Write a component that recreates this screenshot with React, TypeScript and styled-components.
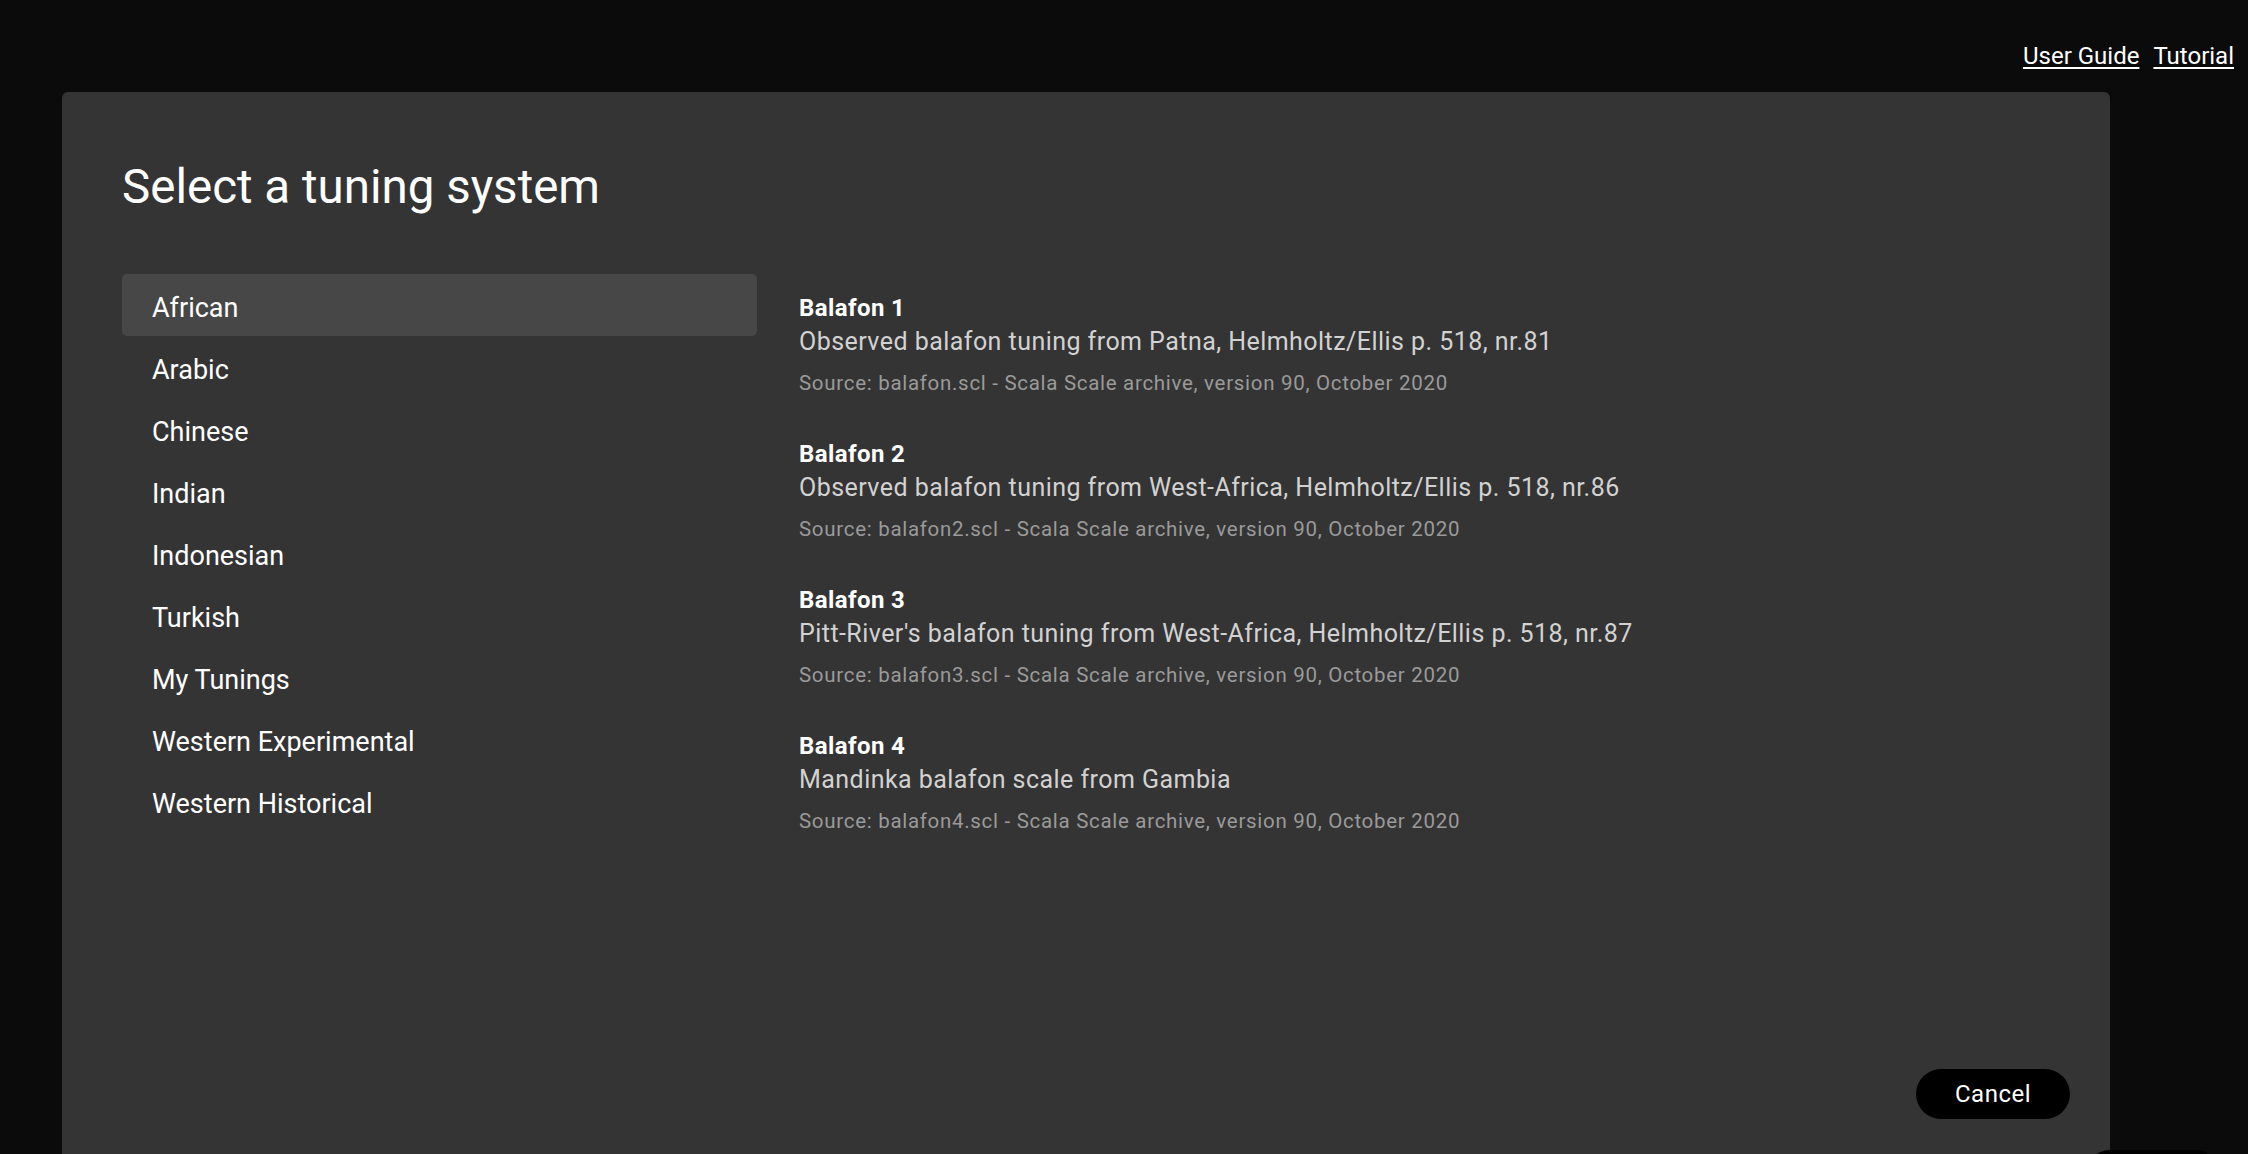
import React, { useState } from "react";
import styled, { createGlobalStyle } from "styled-components";

const GlobalStyle = createGlobalStyle`
  html, body {
    margin: 0;
    padding: 0;
    background: #0b0b0b;
    color: #ffffff;
    font-family: Roboto, "Liberation Sans", Arial, sans-serif;
    overflow: hidden;
  }

  * {
    box-sizing: border-box;
  }
`;

const CATEGORIES = [
  "African",
  "Arabic",
  "Chinese",
  "Indian",
  "Indonesian",
  "Turkish",
  "My Tunings",
  "Western Experimental",
  "Western Historical",
];

interface Tuning {
  name: string;
  description: string;
  source: string;
}

const TUNINGS: Tuning[] = [
  {
    name: "Balafon 1",
    description:
      "Observed balafon tuning from Patna, Helmholtz/Ellis p. 518, nr.81",
    source:
      "Source: balafon.scl - Scala Scale archive, version 90, October 2020",
  },
  {
    name: "Balafon 2",
    description:
      "Observed balafon tuning from West-Africa, Helmholtz/Ellis p. 518, nr.86",
    source:
      "Source: balafon2.scl - Scala Scale archive, version 90, October 2020",
  },
  {
    name: "Balafon 3",
    description:
      "Pitt-River's balafon tuning from West-Africa, Helmholtz/Ellis p. 518, nr.87",
    source:
      "Source: balafon3.scl - Scala Scale archive, version 90, October 2020",
  },
  {
    name: "Balafon 4",
    description: "Mandinka balafon scale from Gambia",
    source:
      "Source: balafon4.scl - Scala Scale archive, version 90, October 2020",
  },
];

const Page = styled.div`
  width: 100vw;
  height: 100vh;
  overflow: hidden;
`;

const TopBar = styled.nav`
  height: 92px;
  display: flex;
  justify-content: flex-end;
  align-items: flex-start;
  gap: 14px;
  padding: 42px 14px 0 0;
`;

const TopLink = styled.a`
  color: #ffffff;
  font-size: 24px;
  line-height: 28px;
  text-decoration: underline;
  text-underline-offset: 3px;
  cursor: pointer;
`;

const Modal = styled.section`
  margin-left: 62px;
  width: 2048px;
  height: 1080px;
  background: #343434;
  border-radius: 6px;
  padding: 67px 40px 53px 60px;
  display: flex;
  flex-direction: column;
`;

const Title = styled.h1`
  margin: 0;
  font-size: 47.5px;
  line-height: 56px;
  font-weight: 400;
`;

const Body = styled.div`
  margin-top: 59px;
  display: flex;
  gap: 42px;
  flex: 1;
`;

const CategoryList = styled.ul`
  list-style: none;
  margin: 0;
  padding: 0;
  width: 635px;
  flex-shrink: 0;
`;

const CategoryItem = styled.li<{ $active: boolean }>`
  height: 62px;
  line-height: 62px;
  padding: 3px 0 0 30px;
  font-size: 27px;
  border-radius: 5px;
  background: ${(p) => (p.$active ? "#474747" : "transparent")};
  cursor: pointer;
`;

const TuningList = styled.div`
  padding-top: 17px;
  display: flex;
  flex-direction: column;
  gap: 40px;
`;

const TuningEntry = styled.div`
  display: flex;
  flex-direction: column;
`;

const TuningName = styled.div`
  font-size: 24px;
  line-height: 34px;
  font-weight: 700;
  letter-spacing: 0.4px;
`;

const TuningDescription = styled.div`
  font-size: 25px;
  line-height: 34px;
  letter-spacing: 0.45px;
  color: #d2d2d2;
`;

const TuningSource = styled.div`
  margin-top: 10px;
  font-size: 20.5px;
  line-height: 28px;
  letter-spacing: 0.7px;
  color: #9a9a9a;
`;

const Footer = styled.div`
  display: flex;
  justify-content: flex-end;
`;

const CancelButton = styled.button`
  min-width: 154px;
  height: 50px;
  border: none;
  border-radius: 25px;
  background: #000000;
  color: #ffffff;
  font-family: inherit;
  font-size: 24px;
  letter-spacing: 0.5px;
  cursor: pointer;
`;

const PeekingPill = styled.div`
  position: fixed;
  right: 28px;
  bottom: -46px;
  width: 135px;
  height: 50px;
  border-radius: 25px;
  background: #000000;
`;

const App = () => {
  const [selected, setSelected] = useState("African");

  return (
    <Page>
      <GlobalStyle />
      <TopBar>
        <TopLink>User Guide</TopLink>
        <TopLink>Tutorial</TopLink>
      </TopBar>
      <Modal>
        <Title>Select a tuning system</Title>
        <Body>
          <CategoryList>
            {CATEGORIES.map((category) => (
              <CategoryItem
                key={category}
                $active={category === selected}
                onClick={() => setSelected(category)}
              >
                {category}
              </CategoryItem>
            ))}
          </CategoryList>
          <TuningList>
            {TUNINGS.map((tuning) => (
              <TuningEntry key={tuning.name}>
                <TuningName>{tuning.name}</TuningName>
                <TuningDescription>{tuning.description}</TuningDescription>
                <TuningSource>{tuning.source}</TuningSource>
              </TuningEntry>
            ))}
          </TuningList>
        </Body>
        <Footer>
          <CancelButton>Cancel</CancelButton>
        </Footer>
      </Modal>
      <PeekingPill />
    </Page>
  );
};

export default App;
